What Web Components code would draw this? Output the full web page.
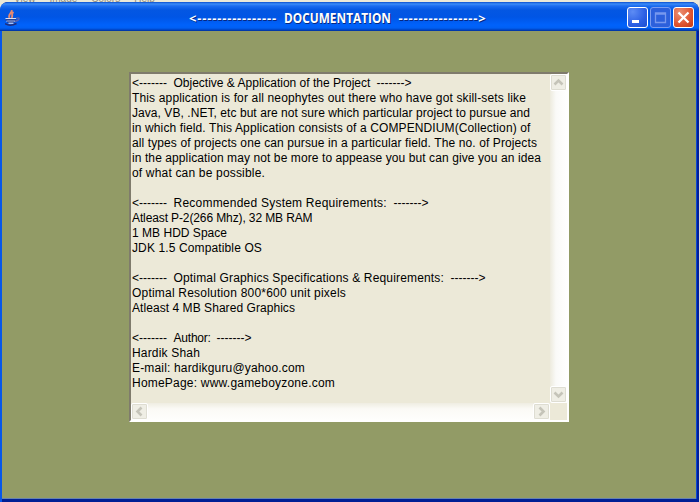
<!DOCTYPE html>
<html lang="en"><head><meta charset="utf-8"><title>Documentation</title>
<style>html,body{margin:0;height:100%;overflow:hidden;background:#ece9d8}</style></head>
<body><doc-window></doc-window>
<script>
class FitText extends HTMLElement{
  connectedCallback(){
    const r=this.attachShadow({mode:'open'});
    r.innerHTML='<style>:host{display:block;white-space:pre;overflow:visible}span{display:inline-block;white-space:pre;transform-origin:0 50%}</style><span></span>';
    const s=r.querySelector('span');s.textContent=this.getAttribute('text');
    const w=+this.getAttribute('w');
    if(w){const n=s.textContent.length,c=s.getBoundingClientRect().width;
      if(this.hasAttribute('squeeze'))s.style.transform='scaleX('+w/c+')';
      else s.style.letterSpacing=((w-c)/n)+'px';}
  }
}
class JavaCup extends HTMLElement{
  constructor(){super();this.attachShadow({mode:'open'}).innerHTML=`<style>:host{display:block;width:16px;height:16px}svg{display:block}</style>
<svg width="16" height="16" fill="none"><path d="M6.500 0C8 3 2.500 3.500 4.500 8M8.500 2C5.500 4 8.500 5.500 6.500 8" stroke="#e8896f" stroke-width="1.900"/><path d="M0.500 8.700h10.500M1.500 11h8.500M3.500 13h5" stroke="#d8e2fa" stroke-width="1.300"/><path d="M0.500 9.800h10.500M2 12h7.500" stroke="#23307a" stroke-width="1.200"/><path d="M11 8.500c4-2 4.500 1.300-1 3" stroke="#5d64ae" stroke-width="1.400"/><path d="M0 13.700c3 1.800 8 1.600 11.500-.2" stroke="#232d78" stroke-width="1.600"/></svg>`}
}
class WinButton extends HTMLElement{
  connectedCallback(){
    const k=this.getAttribute('kind');
    const g={min:'<path d="M5 14.500h7" stroke="#fff" stroke-width="3"/>',max:'<path d="M5.500 6h10v9.500h-10zM5.500 7h10" stroke="#7798ee" stroke-width="1.300"/>',close:'<path d="M5.500 5.500l10 10M15.500 5.500l-10 10" stroke="#fff" stroke-width="2.300"/>'}[k];
    this.attachShadow({mode:'open'}).innerHTML=`<style>:host{display:block;box-sizing:border-box;width:21px;height:21px;border:1px solid #fff;border-radius:3px;background:radial-gradient(circle at 25% 20%,#5d8cf4,#2b5fe4 60%,#1c4fd0)}
:host([kind=max]){border-color:#7a9cf0;background:#2c60dc}
:host([kind=close]){background:radial-gradient(circle at 30% 25%,#ea9074,#df5430 60%,#c23a14)}
svg{display:block;margin:-1px}</style><svg width="21" height="21" fill="none">${g}</svg>`}
}
class TitleBar extends HTMLElement{
  constructor(){super();this.attachShadow({mode:'open'}).innerHTML=`<style>
:host{display:grid;grid-template-columns:184px 94.500px 115px 1fr auto;align-items:center;box-sizing:border-box;height:29px;padding:2px 5px 0 5px;border-radius:7px 7px 0 0;color:#fff;font:bold 14px "Open Sans",sans-serif;text-shadow:1px 1px 0 #072880;
background:linear-gradient(#0a4fd0 0,#3b8cf8 2px,#1b6cf0 4px,#0457e2 8px,#0055e5 15px,#0062fb 23px,#0060f4 26px,#0042c0 28px,#002e96 29px)}
fit-text{line-height:20px}.n{font-weight:700}
.d{font-size:13px}
.b{display:flex;gap:2px}</style><java-cup></java-cup><fit-text class="d" text="<----------------" w="88"></fit-text><fit-text class="n" squeeze text="DOCUMENTATION" w="107"></fit-text><fit-text class="d" text="---------------->" w="88"></fit-text><div class="b"><win-button kind="min"></win-button><win-button kind="max"></win-button><win-button kind="close"></win-button></div>`}
}
class ScrollArrow extends HTMLElement{
  connectedCallback(){
    const a={up:0,right:90,down:180,left:270}[this.getAttribute('dir')];
    this.attachShadow({mode:'open'}).innerHTML=`<style>:host{display:block;box-sizing:border-box;width:17px;height:17px;border:1px solid #fff;border-radius:2px;background:#efeee5;box-shadow:inset 0 0 0 1px #deddd2}svg{display:block;transform:rotate(${a}deg)}</style><svg width="15" height="15" fill="none"><path d="M3.500 9.500L7.500 5.500 11.500 9.500" stroke="#c5c4b9" stroke-width="2.600"/></svg>`}
}
class ScrollBar extends HTMLElement{
  connectedCallback(){
    const v=this.hasAttribute('vertical');
    this.attachShadow({mode:'open'}).innerHTML=`<style>:host{display:flex;justify-content:space-between;background:linear-gradient(#efede2,#fbfaf6 6px,#fefefc)}
:host([vertical]){flex-direction:column;align-items:center;background:linear-gradient(90deg,#edebde,#fafaf8 6px,#fff)}</style><scroll-arrow dir="${v?'up':'left'}"></scroll-arrow><scroll-arrow dir="${v?'down':'right'}"></scroll-arrow>`}
}
class DocHeading extends HTMLElement{
  connectedCallback(){
    const w=+this.getAttribute('w'),r=this.attachShadow({mode:'open'});
    r.innerHTML=`<style>:host{display:grid;grid-template-columns:41.500px ${w}px auto;height:15px}</style><fit-text text="&lt;-------  " w="41.5"></fit-text><fit-text class="m"></fit-text><fit-text text="-------&gt;" w="35"></fit-text>`;
    const m=document.createElement('fit-text');m.setAttribute('text',this.getAttribute('text')+'  ');m.setAttribute('w',w+.5);
    r.querySelector('.m').replaceWith(m);
  }
}
class TextArea extends HTMLElement{
  constructor(){super();
    const L=[['Objective & Application of the Project',203,1],['This application is for all neophytes out there who have got skill-sets like',526],['Java, VB, .NET, etc but are not sure which particular project to pursue and',530],['in which field. This Application consists of a COMPENDIUM(Collection) of',530.5],['all types of projects one can pursue in a particular field. The no. of Projects',537],['in the application may not be more to appease you but can give you an idea',541],['of what can be possible.',265],0,['Recommended System Requirements:',220,1],['Atleast P-2(266 Mhz), 32 MB RAM',312.5],['1 MB HDD Space',227],['JDK 1.5 Compatible OS',262],0,['Optimal Graphics Specifications & Requirements:',277,1],['Optimal Resolution 800*600 unit pixels',346],['Atleast 4 MB Shared Graphics',295],0,['Author:',43,1],['Hardik Shah',200],['E-mail: hardikguru@yahoo.com',305],['HomePage: www.gameboyzone.com',335]];
    this.attachShadow({mode:'open'}).innerHTML=`<style>:host{display:grid;box-sizing:border-box;width:440px;height:350px;grid-template:1fr 17px/1fr 17px;border:2px solid;border-color:#7f7b6c #fff #fff #7f7b6c;background:#ece9d8;color:#000;font:12px/15px "Liberation Sans",Arial,sans-serif}
.t{padding:2px 0 0 1px;overflow:hidden}fit-text{height:15px}</style><div class="t"></div><scroll-bar vertical></scroll-bar><scroll-bar></scroll-bar><div></div>`;
    const t=this.shadowRoot.querySelector('.t');
    for(const l of L){const e=document.createElement(l&&l[2]?'doc-heading':'fit-text');e.setAttribute('text',l?l[0]:'');if(l)e.setAttribute('w',l[2]?l[1]:l[1]-132);t.append(e);}
  }
}
class DocWindow extends HTMLElement{
  constructor(){super();this.attachShadow({mode:'open'}).innerHTML=`<style>:host{display:block;width:699px;height:502px;border-right:1px solid #dddcd8}
.m{display:flex;align-items:flex-end;gap:14px;height:2px;overflow:hidden;padding-left:14px;color:#8d8b80;font:10px/11px "Liberation Sans",sans-serif}
.m span{margin-bottom:-2px}
.w{display:flex;flex-direction:column;height:500px;border-radius:8px 8px 0 0;overflow:hidden;background:linear-gradient(90deg,#0757ea 0 2px,#001f95 2px 697px,#001f9a 697px)}
.c{flex:1;margin:0 3px 3px 2px;background:#929b66;border-bottom:1px solid #6783b0;display:flex;padding:41px 0 0 127px;box-sizing:border-box;align-items:flex-start;box-shadow:1px 0 #0b49d4}</style><div class="m"><span>View</span><span>Image</span><span>Colors</span><span>Help</span></div><div class="w"><title-bar></title-bar><div class="c"><text-area></text-area></div></div>`}
}
customElements.define('fit-text',FitText);customElements.define('java-cup',JavaCup);customElements.define('win-button',WinButton);customElements.define('title-bar',TitleBar);customElements.define('scroll-arrow',ScrollArrow);customElements.define('scroll-bar',ScrollBar);customElements.define('doc-heading',DocHeading);customElements.define('text-area',TextArea);customElements.define('doc-window',DocWindow);
</script></body></html>
